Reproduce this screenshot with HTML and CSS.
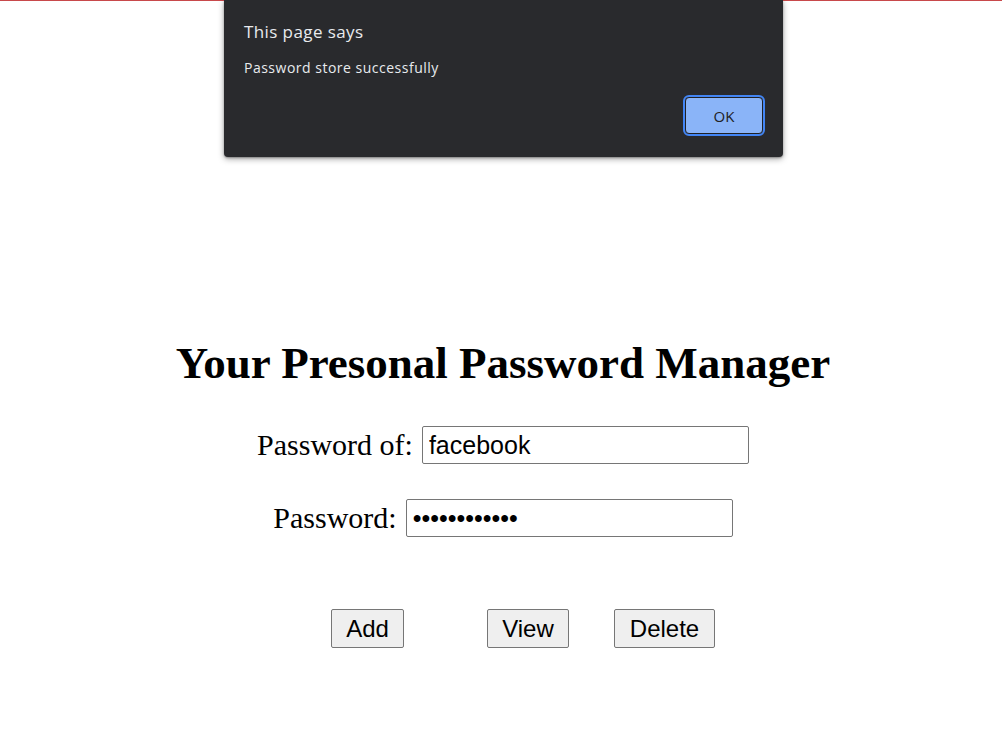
FILE: index.html
```html
<!DOCTYPE html>
<html>
<head>
<meta charset="utf-8">
<title>Password Manager</title>
<link rel="stylesheet" href="styles.css">
</head>
<body>
<div class="topline"></div>
<main class="page">
  <h1 class="title">Your Presonal Password Manager</h1>
  <form class="form">
    <div class="row row-1">
      <label class="label" for="site">Password of:</label>
      <input class="field" id="site" type="text" value="facebook">
    </div>
    <div class="row row-2">
      <label class="label" for="pw">Password:</label>
      <input class="field" id="pw" type="password" value="secretpasswd">
    </div>
    <div class="actions">
      <button type="button" class="btn btn-add">Add</button>
      <button type="button" class="btn btn-view">View</button>
      <button type="button" class="btn btn-delete">Delete</button>
    </div>
  </form>
</main>
<div class="dialog" role="alertdialog">
  <div class="dialog-title">This page says</div>
  <div class="dialog-msg">Password store successfully</div>
  <div class="dialog-actions">
    <button type="button" class="dialog-ok">OK</button>
  </div>
</div>
</body>
</html>
```

FILE: styles.css
```css
html, body {
  margin: 0;
  padding: 0;
  background: #ffffff;
}
body {
  font-family: "Liberation Serif", "Times New Roman", serif;
  color: #000;
  width: 1002px;
  height: 731px;
  overflow: hidden;
  position: relative;
}
.topline {
  height: 1px;
  background: #c8494b;
}
.page {
  display: flex;
  flex-direction: column;
  align-items: center;
  padding-top: 337px;
  padding-left: 4px;
}
.title {
  font-size: 45px;
  font-weight: bold;
  margin: 0;
  line-height: 51px;
}
.form {
  display: flex;
  flex-direction: column;
  align-items: center;
  margin-top: 37px;
}
.row {
  display: flex;
  align-items: center;
  gap: 9px;
  height: 38px;
}
.row-2 {
  margin-top: 35px;
}
.label {
  font-size: 30px;
  font-family: "Liberation Serif", "Times New Roman", serif;
}
.field {
  box-sizing: border-box;
  width: 327px;
  height: 38px;
  border: 1px solid #767676;
  border-radius: 2px;
  padding: 1px 6px;
  font-family: "Liberation Sans", Arial, sans-serif;
  font-size: 25px;
  color: #000;
  margin: 0;
}
.actions {
  display: flex;
  margin-top: 72px;
  padding-left: 40px;
}
.btn {
  box-sizing: border-box;
  height: 39px;
  font-family: "Liberation Sans", Arial, sans-serif;
  font-size: 24px;
  padding: 1px 6px;
  background: #efefef;
  border: 1px solid #767676;
  border-radius: 2px;
  color: #000;
  margin: 0;
}
.btn-add { width: 73px; }
.btn-view { width: 82px; margin-left: 83px; }
.btn-delete { width: 101px; margin-left: 45px; }

.dialog {
  position: absolute;
  left: 224px;
  top: 0;
  width: 559px;
  height: 157px;
  box-sizing: border-box;
  background: #292a2d;
  border-radius: 0 0 4px 4px;
  box-shadow: 0 2px 6px rgba(0,0,0,0.35), 0 1px 2px rgba(0,0,0,0.3);
  padding: 20px 19px 0 20px;
  font-family: "Open Sans", "Noto Sans", sans-serif;
  color: #e8eaed;
  display: flex;
  flex-direction: column;
}
.dialog-title {
  font-size: 17px;
  line-height: 24px;
  letter-spacing: 0.4px;
}
.dialog-msg {
  font-size: 14px;
  line-height: 20px;
  margin-top: 14px;
  letter-spacing: 0.5px;
}
.dialog-actions {
  display: flex;
  justify-content: flex-end;
  margin-top: 19px;
}
.dialog-ok {
  box-sizing: border-box;
  width: 78px;
  height: 37px;
  background: #8ab4f8;
  border: 1px solid #202124;
  border-radius: 4px;
  outline: 2px solid #4285f4;
  outline-offset: 0;
  font-family: "Open Sans", "Noto Sans", sans-serif;
  font-size: 15px;
  color: #202124;
  margin-right: 1px;
  padding: 0;
}
```
